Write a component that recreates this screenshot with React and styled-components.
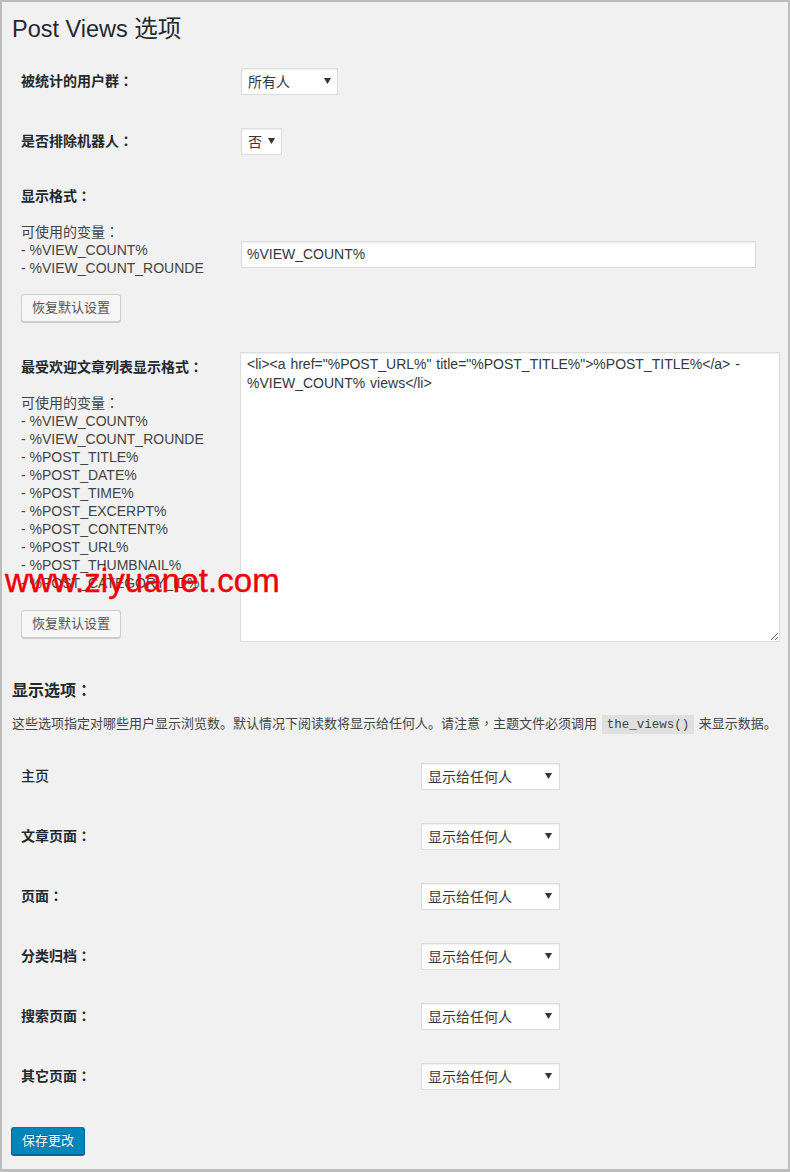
import React from "react";
import styled, { createGlobalStyle } from "styled-components";

const GlobalStyle = createGlobalStyle`
  html, body { margin: 0; padding: 0; background: #f1f1f1; }
  * { box-sizing: border-box; }
`;

const FONT = `"Liberation Sans", "Noto Sans CJK SC", "Noto Sans", sans-serif`;

const Page = styled.div`
  position: relative;
  width: 790px;
  height: 1172px;
  border: 2px solid #bdbdbd;
  border-bottom-width: 3px;
  background: #f1f1f1;
  padding: 13px 8px 0 10px;
  font-family: ${FONT};
  color: #444;
  overflow: hidden;
`;

const Title = styled.h1`
  margin: 0;
  font-size: 23.5px;
  font-weight: 400;
  line-height: 29px;
  color: #23282d;
`;

const FormTable = styled.div`
  display: flex;
  flex-direction: column;
  margin: ${(p) => p.$mt || 0}px 0 0 9px;
`;

const Row = styled.div`
  display: grid;
  grid-template-columns: ${(p) => p.$th}px 1fr;
  align-items: ${(p) => p.$align || "center"};
  ${(p) => (p.$h ? `height: ${p.$h}px;` : "")}
`;

const Th = styled.div`
  padding: ${(p) => p.$pad || "0"};
  font-size: 14px;
  line-height: 18px;
`;

const Td = styled.div`
  padding: ${(p) => p.$pad || "0"};
  display: flex;
  align-items: center;
`;

const Label = styled.div`
  font-weight: ${(p) => (p.$plain ? 500 : 700)};
  color: #23282d;
  font-size: 14px;
  line-height: 18px;
  white-space: nowrap;
`;

const Punct = styled.span`
  font-family: "Noto Sans CJK TC", "Noto Sans CJK SC", sans-serif;
  line-height: 0;
`;

const VarList = styled.div`
  margin-top: 18px;
  color: #444;
  font-size: 14px;
  line-height: 18px;
  white-space: nowrap;
`;

const ResetButton = styled.button`
  display: block;
  margin-top: ${(p) => p.$mt || 17}px;
  height: 28px;
  padding: 0 10px;
  font-family: ${FONT};
  font-size: 13px;
  line-height: 26px;
  color: #555;
  background: #f7f7f7;
  border: 1px solid #ccc;
  border-radius: 3px;
  box-shadow: 0 1px 0 #ccc;
  cursor: pointer;
`;

const SelectBox = styled.div`
  display: inline-flex;
  align-items: center;
  justify-content: space-between;
  width: ${(p) => p.$w}px;
  height: 27px;
  padding: 0 ${(p) => p.$pr || 7}px 0 6px;
  background: #fff;
  border: 1px solid #ddd;
  box-shadow: inset 0 1px 2px rgba(0, 0, 0, 0.07);
  font-size: 14px;
  color: #32373c;
  white-space: nowrap;
`;

const TextInput = styled.input`
  width: 515px;
  height: 27px;
  padding: 0 5px;
  border: 1px solid #ddd;
  box-shadow: inset 0 1px 2px rgba(0, 0, 0, 0.07);
  background: #fff;
  font-family: ${FONT};
  font-size: 14px;
  color: #32373c;
  outline: none;
`;

const TextArea = styled.textarea`
  display: block;
  width: 540px;
  height: 290px;
  padding: 2px 6px;
  border: 1px solid #ddd;
  box-shadow: inset 0 1px 2px rgba(0, 0, 0, 0.07);
  background: #fff;
  font-family: ${FONT};
  font-size: 14px;
  line-height: 19px;
  word-spacing: 1px;
  color: #32373c;
  outline: none;
  resize: both;
`;

const SectionTitle = styled.h2`
  margin: 22px 0 0;
  font-size: 16px;
  line-height: 21px;
  font-weight: 700;
  color: #23282d;
`;

const Desc = styled.p`
  margin: 13px 0 0;
  font-size: 13px;
  line-height: 20px;
  color: #444;
  white-space: nowrap;
`;

const Code = styled.code`
  padding: 3px 5px 2px;
  margin: 0 1px;
  background: rgba(0, 0, 0, 0.07);
  font-family: "Liberation Mono", "DejaVu Sans Mono", monospace;
  font-size: 12.5px;
  line-height: 0;
  color: #444;
`;

const SubmitRow = styled.div`
  margin-top: 21px;
  margin-left: -1px;
`;

const PrimaryButton = styled.button`
  height: 28px;
  padding: 0 10px;
  font-family: ${FONT};
  font-size: 13px;
  line-height: 26px;
  color: #fff;
  background: #0085ba;
  border: 1px solid;
  border-color: #0073aa #006799 #006799;
  border-radius: 3px;
  box-shadow: 0 1px 0 #006799;
  text-shadow: 0 -1px 1px #006799, 1px 0 1px #006799;
  cursor: pointer;
`;

const Watermark = styled.div`
  position: absolute;
  top: 562px;
  left: 3px;
  font-family: "Liberation Sans", Arial, sans-serif;
  font-size: 33px;
  line-height: 1;
  color: #f00000;
  letter-spacing: 0.1px;
  -webkit-text-stroke: 0.4px #f00000;
  pointer-events: none;
`;

const Arrow = () => (
  <svg width="7" height="6" viewBox="0 0 7 6" aria-hidden="true">
    <polygon points="0,0 7,0 3.5,6" fill="#333" />
  </svg>
);

const Select = ({ w, pr, children }) => (
  <SelectBox $w={w} $pr={pr}>
    <span>{children}</span>
    <Arrow />
  </SelectBox>
);

const withColon = (text) =>
  text.endsWith("：") ? (
    <>
      {text.slice(0, -1)}
      <Punct>：</Punct>
    </>
  ) : (
    text
  );

const displayRows = [
  { label: "主页", plain: true },
  { label: "文章页面：" },
  { label: "页面：" },
  { label: "分类归档：" },
  { label: "搜索页面：" },
  { label: "其它页面：" },
];

const popularVars = [
  "%VIEW_COUNT%",
  "%VIEW_COUNT_ROUNDE",
  "%POST_TITLE%",
  "%POST_DATE%",
  "%POST_TIME%",
  "%POST_EXCERPT%",
  "%POST_CONTENT%",
  "%POST_URL%",
  "%POST_THUMBNAIL%",
  "%POST_CATEGORY_ID%",
];

export default function App() {
  return (
    <>
      <GlobalStyle />
      <Page>
        <Title>Post Views 选项</Title>

        <FormTable $mt={7}>
          <Row $th={220} $h={60}>
            <Th>
              <Label>{withColon("被统计的用户群：")}</Label>
            </Th>
            <Td>
              <Select w={97} pr={6}>所有人</Select>
            </Td>
          </Row>
          <Row $th={220} $h={60}>
            <Th>
              <Label>{withColon("是否排除机器人：")}</Label>
            </Th>
            <Td>
              <Select w={41} pr={6}>否</Select>
            </Td>
          </Row>
          <Row $th={220}>
            <Th $pad="16px 0 20px">
              <Label>{withColon("显示格式：")}</Label>
              <VarList>
                {withColon("可使用的变量：")}
                <br />- %VIEW_COUNT%
                <br />- %VIEW_COUNT_ROUNDE
              </VarList>
              <ResetButton $mt={17}>恢复默认设置</ResetButton>
            </Th>
            <Td $pad="0 0 5px">
              <TextInput defaultValue="%VIEW_COUNT%" />
            </Td>
          </Row>
          <Row $th={219} $align="start">
            <Th $pad="16px 0 20px 1px" style={{ marginLeft: -1 }}>
              <Label>{withColon("最受欢迎文章列表显示格式：")}</Label>
              <VarList>
                {withColon("可使用的变量：")}
                {popularVars.map((v) => (
                  <React.Fragment key={v}>
                    <br />- {v}
                  </React.Fragment>
                ))}
              </VarList>
              <ResetButton $mt={18}>恢复默认设置</ResetButton>
            </Th>
            <Td $pad="10px 0 0">
              <TextArea defaultValue={'<li><a href="%POST_URL%" title="%POST_TITLE%">%POST_TITLE%</a> - %VIEW_COUNT% views</li>'} />
            </Td>
          </Row>
        </FormTable>

        <SectionTitle>{withColon("显示选项：")}</SectionTitle>
        <Desc>
          这些选项指定对哪些用户显示浏览数。默认情况下阅读数将显示给任何人。请注意<Punct>，</Punct>主题文件必须调用 <Code>the_views()</Code> 来显示数据。
        </Desc>

        <FormTable $mt={12}>
          {displayRows.map((r) => (
            <Row key={r.label} $th={400} $h={60}>
              <Th>
                <Label $plain={r.plain}>{withColon(r.label)}</Label>
              </Th>
              <Td>
                <Select w={139} pr={7}>显示给任何人</Select>
              </Td>
            </Row>
          ))}
        </FormTable>

        <SubmitRow>
          <PrimaryButton>保存更改</PrimaryButton>
        </SubmitRow>

        <Watermark>www.ziyuanet.com</Watermark>
      </Page>
    </>
  );
}
